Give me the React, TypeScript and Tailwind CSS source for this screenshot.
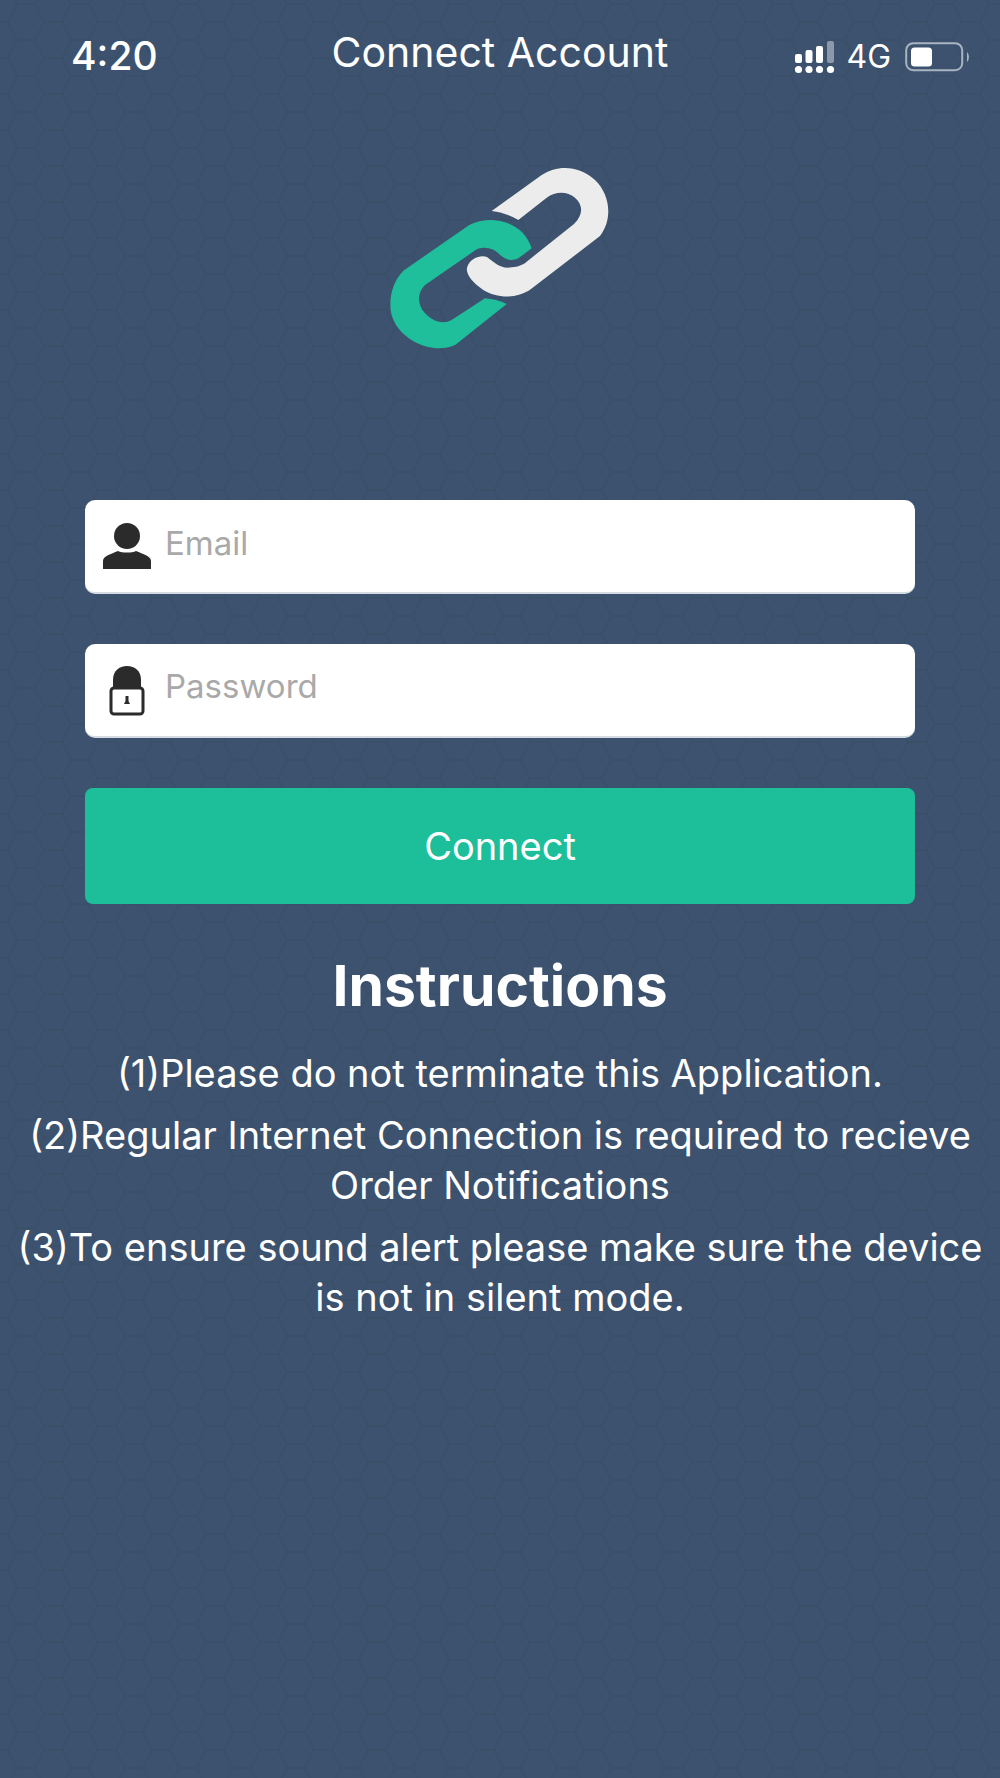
export default function App() {
  return (
    <div className="relative w-[1000px] h-[1778px] overflow-hidden bg-[#3d526e] text-white font-['Inter','Liberation_Sans',sans-serif]">
      <svg className="absolute inset-0 w-full h-full" aria-hidden="true">
        <defs>
          <pattern id="hex" x="8" y="4" width="54" height="36" patternUnits="userSpaceOnUse">
            <path d="M0 18 L9 0 H27 L36 18 L27 36 H9 Z M36 18 H54" fill="none" stroke="#3a4f68" strokeWidth="2" />
          </pattern>
        </defs>
        <rect width="1000" height="1778" fill="url(#hex)" />
      </svg>

      <div className="relative flex flex-col">
        <header className="grid grid-cols-[1fr_auto_1fr] items-center h-[104px] px-[28px]">
          <span className="ml-[43px] text-[39px] leading-[44px] font-medium pt-[8px]">4:20</span>
          <span className="text-[41px] leading-[44px] font-normal">Connect Account</span>
          <div className="flex items-center justify-end gap-[11px] pt-[10px] pr-[1px]">
            <svg width="41" height="33" viewBox="0 0 41 33" fill="#fff">
              <rect x="1" y="13" width="7" height="9" rx="2" />
              <rect x="11.5" y="9" width="7" height="13" rx="2" />
              <rect x="22" y="5" width="7" height="17" rx="2" />
              <rect x="33" y="0" width="7" height="22" rx="2" fill="#8b99ab" />
              <circle cx="4.5" cy="28.5" r="3.6" />
              <circle cx="15" cy="28.5" r="3.6" />
              <circle cx="25.5" cy="28.5" r="3.6" />
              <circle cx="36.5" cy="28.5" r="3.6" />
            </svg>
            <span className="mr-[3px] text-[32px] leading-[34px]">4G</span>
            <svg width="66" height="30" viewBox="0 0 66 30" fill="none">
              <rect x="1.2" y="1.2" width="56" height="27" rx="7" stroke="#a9b4c2" strokeWidth="2" />
              <rect x="6" y="5.5" width="21" height="19" rx="3.5" fill="#fff" />
              <path d="M62 10 C64.5 12 64.5 18 62 20 Z" fill="#a9b4c2" />
            </svg>
          </div>
        </header>

        <div className="flex justify-center pt-[46px]">
          <svg width="260" height="210" viewBox="0 0 780 630">
            <path
              fill="#ececec"
              d="M365 183 L515 75 C565 42 630 48 675 90 C722 135 728 210 690 258 L482 418 C440 448 380 445 340 420 C305 395 285 370 292 350 C300 325 335 312 352 322 C375 340 395 358 425 352 C445 350 458 345 470 335 L612 222 C640 195 640 165 615 143 C590 122 555 125 530 143 L445 210 C420 195 395 187 365 183 Z"
            />
            <path
              fill="#1fbf9b"
              d="M485 295 C470 245 425 212 365 210 C340 210 318 215 298 225 L100 362 C68 395 58 440 62 480 C70 545 140 595 210 595 C235 593 250 590 262 580 L410 462 C390 452 368 447 345 445 L245 510 C215 525 185 512 165 490 C142 465 140 430 165 405 L320 298 C345 288 370 295 385 310 C405 330 425 335 445 325 Z"
            />
          </svg>
        </div>

        <form className="flex flex-col pt-[140px] px-[85px]">
          <div className="flex items-center h-[94px] bg-white rounded-[10px] border-b-2 border-[#d5dbe3]">
            <svg width="50" height="46" viewBox="0 0 50 46" fill="#2b2b2b" className="ml-[17px]">
              <ellipse cx="25" cy="13" rx="13" ry="13" />
              <path d="M1 46 V38 C1 33 9 31 16 28 C20 30 30 30 34 28 C41 31 49 33 49 38 V46 Z" />
            </svg>
            <span className="ml-[13px] mb-[6px] text-[33px] leading-[40px] text-[#a9a9a9]">Email</span>
          </div>
          <div className="flex items-center h-[94px] mt-[50px] bg-white rounded-[10px] border-b-2 border-[#d5dbe3]">
            <svg width="36" height="50" viewBox="0 0 36 50" className="ml-[24px] mt-[2px]">
              <path d="M4 24 V14 C4 5 10 0 18 0 C26 0 32 5 32 14 V24 Z" fill="#2b2b2b" />
              <rect x="2" y="22" width="32" height="26" rx="3" fill="#fff" stroke="#2b2b2b" strokeWidth="3" />
              <path d="M16.5 30 H19.5 V35 L21 38 H15 L16.5 35 Z" fill="#2b2b2b" />
            </svg>
            <span className="ml-[20px] mb-[8px] text-[33px] leading-[40px] text-[#a9a9a9]">Password</span>
          </div>
          <button type="button" className="h-[116px] mt-[50px] rounded-[8px] bg-[#1dbf9b] text-[38px] leading-[44px] font-normal text-white">
            Connect
          </button>
        </form>

        <section className="flex flex-col items-center text-center pt-[50px]">
          <h1 className="text-[57px] leading-[64px] font-bold">Instructions</h1>
          <div className="flex flex-col gap-[12px] pt-[30px] text-[38px] leading-[50px] font-normal">
            <p>(1)Please do not terminate this Application.</p>
            <p>
              (2)Regular Internet Connection is required to recieve
              <br />
              Order Notifications
            </p>
            <p>
              (3)To ensure sound alert please make sure the device
              <br />
              is not in silent mode.
            </p>
          </div>
        </section>
      </div>
    </div>
  );
}
